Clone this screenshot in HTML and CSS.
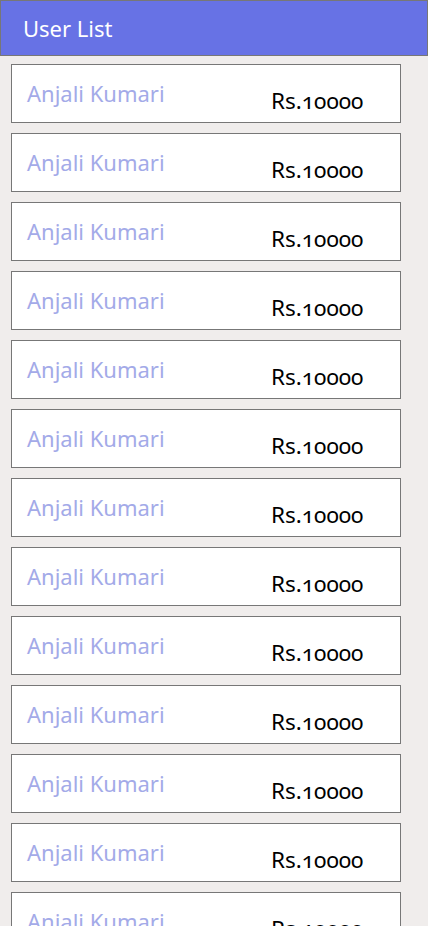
FILE: index.html
```html
<!DOCTYPE html>
<html>
<head>
<meta charset="utf-8">
<link rel="stylesheet" href="styles.css">
</head>
<body>
<header class="topbar"><span class="title">User List</span></header>
<main class="list">
  <div class="card"><span class="name">Anjali Kumari</span><span class="price">Rs.10000</span></div>
  <div class="card"><span class="name">Anjali Kumari</span><span class="price">Rs.10000</span></div>
  <div class="card"><span class="name">Anjali Kumari</span><span class="price">Rs.10000</span></div>
  <div class="card"><span class="name">Anjali Kumari</span><span class="price">Rs.10000</span></div>
  <div class="card"><span class="name">Anjali Kumari</span><span class="price">Rs.10000</span></div>
  <div class="card"><span class="name">Anjali Kumari</span><span class="price">Rs.10000</span></div>
  <div class="card"><span class="name">Anjali Kumari</span><span class="price">Rs.10000</span></div>
  <div class="card"><span class="name">Anjali Kumari</span><span class="price">Rs.10000</span></div>
  <div class="card"><span class="name">Anjali Kumari</span><span class="price">Rs.10000</span></div>
  <div class="card"><span class="name">Anjali Kumari</span><span class="price">Rs.10000</span></div>
  <div class="card"><span class="name">Anjali Kumari</span><span class="price">Rs.10000</span></div>
  <div class="card"><span class="name">Anjali Kumari</span><span class="price">Rs.10000</span></div>
  <div class="card"><span class="name">Anjali Kumari</span><span class="price">Rs.10000</span></div>
  <div class="card"><span class="name">Anjali Kumari</span><span class="price">Rs.10000</span></div>
</main>
</body>
</html>
```
FILE: styles.css
```css
html, body {
  margin: 0;
  padding: 0;
  background: #f0edec;
  font-family: "Noto Sans", "Open Sans", sans-serif;
  overflow: hidden;
}
.topbar {
  box-sizing: border-box;
  height: 56px;
  background: #6772e5;
  border: 1px solid #777777;
  display: flex;
  align-items: center;
  padding-left: 22px;
}
.title {
  color: #ffffff;
  font-size: 22px;
  line-height: 1;
}
.list {
  padding: 8px 0 0 11px;
  display: flex;
  flex-direction: column;
  gap: 10px;
}
.card {
  box-sizing: border-box;
  width: 390px;
  height: 59px;
  background: #ffffff;
  border: 1px solid #777777;
  display: grid;
  grid-template-columns: 1fr 129px;
  align-items: start;
}
.name {
  color: #a3aae8;
  font-size: 22px;
  line-height: 1;
  padding: 17px 0 0 15px;
}
.price {
  color: #000000;
  font-size: 22.5px;
  line-height: 1;
  padding-top: 25px;
  font-variant-numeric: oldstyle-nums;
}
```
